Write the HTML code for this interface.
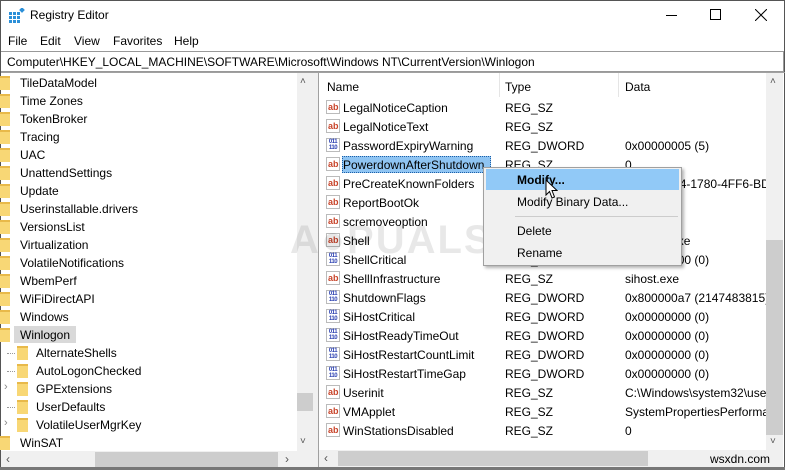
<!DOCTYPE html>
<html><head><meta charset="utf-8"><style>
*{margin:0;padding:0;box-sizing:border-box}
body{width:785px;height:470px;overflow:hidden;background:#fff;font-family:"Liberation Sans",sans-serif;font-size:12px;color:#000;position:relative}
.a{position:absolute;white-space:nowrap}
.fold{position:absolute;width:11px;height:14px;background:#f8d775;border-top:2px solid #e8b94a}
.ab{position:absolute;width:14px;height:14px;border:1px solid #bbb;background:#fff;color:#c8442a;font-size:9px;font-weight:bold;line-height:12px;text-align:left;padding-left:1px}
.bin{position:absolute;width:14px;height:14px;border:1px solid #bbb;background:#fff;color:#2a3fb0;font-size:6px;font-weight:bold;line-height:6px;text-align:center;letter-spacing:-0.5px}
</style></head><body>
<div class="a" style="left:0;top:0;width:785px;height:470px;border:1px solid #555;border-bottom:none"></div>
<svg class="a" style="left:9px;top:8px" width="16" height="16"><g fill="#2b8fd8"><rect x="0" y="4" width="3" height="3"/><rect x="4" y="4" width="3" height="3"/><rect x="8" y="4" width="3" height="3"/><rect x="0" y="8" width="3" height="3"/><rect x="4" y="8" width="3" height="3"/><rect x="8" y="8" width="3" height="3"/><rect x="0" y="12" width="3" height="3"/><rect x="4" y="12" width="3" height="3"/><rect x="8" y="12" width="3" height="3"/><rect x="11" y="0" width="4" height="4" transform="rotate(45 13 2)"/></g></svg>
<div class="a" style="left:30px;top:8px;font-size:12px">Registry Editor</div>
<div class="a" style="left:666px;top:15px;width:11px;height:1px;background:#000"></div>
<div class="a" style="left:710px;top:9px;width:11px;height:11px;border:1px solid #000"></div>
<svg class="a" style="left:755px;top:9px" width="12" height="12"><path d="M0 0L12 12M12 0L0 12" stroke="#000" stroke-width="1"/></svg>
<div class="a" style="left:8px;top:34px">File</div>
<div class="a" style="left:40px;top:34px">Edit</div>
<div class="a" style="left:74px;top:34px">View</div>
<div class="a" style="left:113px;top:34px">Favorites</div>
<div class="a" style="left:174px;top:34px">Help</div>
<div class="a" style="left:1px;top:51px;width:783px;height:21px;border:1px solid #999;border-left:none;background:#fff"></div>
<div class="a" style="left:7px;top:55px">Computer\HKEY_LOCAL_MACHINE\SOFTWARE\Microsoft\Windows NT\CurrentVersion\Winlogon</div>
<div class="a" style="left:313px;top:72px;width:6px;height:396px;background:#f0f0f0"></div>
<div class="a" style="left:318px;top:72px;width:1px;height:396px;background:#a0a0a0"></div>
<div class="a" style="left:1px;top:72px;width:784px;height:1px;background:#a0a0a0"></div>
<div class="a" style="left:14px;top:326px;width:62px;height:17px;background:#d9d9d9"></div>
<div id="tree"></div>
<script>
var L=["TileDataModel","Time Zones","TokenBroker","Tracing","UAC","UnattendSettings","Update","Userinstallable.drivers","VersionsList","Virtualization","VolatileNotifications","WbemPerf","WiFiDirectAPI","Windows","Winlogon","AlternateShells","AutoLogonChecked","GPExtensions","UserDefaults","VolatileUserMgrKey","WinSAT"];
var h="";
for(var i=0;i<L.length;i++){var y=74+i*18;var sub=(i>=15&&i<=19);var fx=sub?17:0;var tx=sub?36:20;
h+='<div class="fold" style="left:'+(fx-(sub?0:1))+'px;top:'+(y+2)+'px"></div><div class="a" style="left:'+tx+'px;top:'+(y+2)+'px">'+L[i]+'</div>';
if(sub){if(i==17||i==19)h+='<div class="a" style="left:4px;top:'+(y+1)+'px;color:#888;font-size:11px">&#x203A;</div>';else h+='<div class="a" style="left:7px;top:'+(y+9)+'px;width:8px;border-top:1px dotted #999"></div>';}}
document.getElementById("tree").innerHTML=h;
</script>
<div class="a" style="left:297px;top:73px;width:16px;height:378px;background:#f0f0f0"></div>
<div class="a" style="left:300px;top:76px;color:#555;font-size:10px">&#x2C4;</div>
<div class="a" style="left:297px;top:393px;width:16px;height:18px;background:#cdcdcd"></div>
<div class="a" style="left:300px;top:436px;color:#555;font-size:10px">&#x2C5;</div>
<div class="a" style="left:1px;top:451px;width:296px;height:17px;background:#f0f0f0"></div>
<div class="a" style="left:95px;top:452px;width:183px;height:15px;background:#cdcdcd"></div>
<div class="a" style="left:6px;top:452px;color:#555">&#x2039;</div>
<div class="a" style="left:285px;top:452px;color:#555">&#x203A;</div>
<div class="a" style="left:297px;top:451px;width:16px;height:17px;background:#f0f0f0"></div>
<div class="a" style="left:327px;top:80px">Name</div>
<div class="a" style="left:505px;top:80px">Type</div>
<div class="a" style="left:625px;top:80px">Data</div>
<div class="a" style="left:499px;top:73px;width:1px;height:24px;background:#e5e5e5"></div>
<div class="a" style="left:618px;top:73px;width:1px;height:24px;background:#e5e5e5"></div>
<div id="rows"></div>
<script>
var R=[["s","LegalNoticeCaption","REG_SZ",""],["s","LegalNoticeText","REG_SZ",""],["b","PasswordExpiryWarning","REG_DWORD","0x00000005 (5)"],["s","PowerdownAfterShutdown","REG_SZ","0"],["s","PreCreateKnownFolders","REG_SZ","{A520A1A4-1780-4FF6-BD18-167343C5AF16}"],["s","ReportBootOk","REG_SZ","1"],["s","scremoveoption","REG_SZ","0"],["s","Shell","REG_SZ","explorer.exe"],["b","ShellCritical","REG_DWORD","0x00000000 (0)"],["s","ShellInfrastructure","REG_SZ","sihost.exe"],["b","ShutdownFlags","REG_DWORD","0x800000a7 (2147483815)"],["b","SiHostCritical","REG_DWORD","0x00000000 (0)"],["b","SiHostReadyTimeOut","REG_DWORD","0x00000000 (0)"],["b","SiHostRestartCountLimit","REG_DWORD","0x00000000 (0)"],["b","SiHostRestartTimeGap","REG_DWORD","0x00000000 (0)"],["s","Userinit","REG_SZ","C:\\Windows\\system32\\userinit.exe,"],["s","VMApplet","REG_SZ","SystemPropertiesPerformance.exe /pagefile"],["s","WinStationsDisabled","REG_SZ","0"]];
var h="";
for(var i=0;i<R.length;i++){var y=98+i*19;var r=R[i];
h+=(r[0]=="s"?'<div class="ab" style="left:326px;top:'+(y+2)+'px">ab</div>':'<div class="bin" style="left:326px;top:'+(y+2)+'px">011<br>110</div>');
if(i==3)h+='<div class="a" style="left:342px;top:'+(y+1)+'px;width:149px;height:17px;background:#8fc4f2;border:1px dotted #1c5fa8"></div>';
h+='<div class="a" style="left:343px;top:'+(y+3)+'px">'+r[1]+'</div><div class="a" style="left:505px;top:'+(y+3)+'px">'+r[2]+'</div><div class="a" style="left:625px;top:'+(y+3)+'px;width:141px;overflow:hidden">'+r[3]+'</div>';}
document.getElementById("rows").innerHTML=h;
</script>
<div class="a" style="left:290px;top:218px;font-size:40px;font-weight:bold;color:rgba(0,0,0,0.09);letter-spacing:2px">A&#x25CF;PUALS</div>
<div class="a" style="left:766px;top:73px;width:17px;height:377px;background:#f0f0f0"></div>
<div class="a" style="left:770px;top:76px;color:#555;font-size:10px">&#x2C4;</div>
<div class="a" style="left:766px;top:240px;width:17px;height:195px;background:#cdcdcd"></div>
<div class="a" style="left:770px;top:436px;color:#555;font-size:10px">&#x2C5;</div>
<div class="a" style="left:319px;top:450px;width:464px;height:17px;background:#f0f0f0"></div>
<div class="a" style="left:338px;top:451px;width:310px;height:15px;background:#cdcdcd"></div>
<div class="a" style="left:324px;top:451px;color:#555">&#x2039;</div>
<div class="a" style="left:710px;top:452px;font-size:12px;color:#000">wsxdn.com</div>
<div class="a" style="left:0;top:467px;width:785px;height:3px;background:#777"></div>
<div class="a" style="left:483px;top:167px;width:199px;height:99px;background:#f0f0f0;border:1px solid #a0a0a0;box-shadow:2px 2px 3px rgba(0,0,0,.3)"></div>
<div class="a" style="left:486px;top:169px;width:193px;height:21px;background:#91c9f7"></div>
<div class="a" style="left:517px;top:173px;font-weight:bold">Modify...</div>
<div class="a" style="left:517px;top:195px">Modify Binary Data...</div>
<div class="a" style="left:515px;top:216px;width:163px;height:1px;background:#ccc"></div>
<div class="a" style="left:517px;top:224px">Delete</div>
<div class="a" style="left:517px;top:246px">Rename</div>
<svg class="a" style="left:545px;top:179px" width="13" height="21"><path d="M1 1L1 16L4.5 12.5L7 19L9.5 18L7 11.5L12 11.5Z" fill="#fff" stroke="#000" stroke-width="1"/></svg>
</body></html>
